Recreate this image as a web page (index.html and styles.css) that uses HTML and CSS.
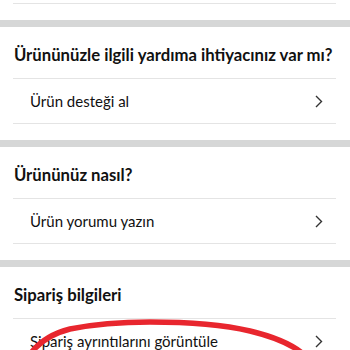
FILE: index.html
```html
<!DOCTYPE html>
<html lang="tr">
<head>
<meta charset="utf-8">
<link rel="stylesheet" href="styles.css">
</head>
<body>
<div class="page">
  <div class="divider first"></div>
  <section class="section">
    <div class="band"></div>
    <h2 class="heading">Ürününüzle ilgili yardıma ihtiyacınız var mı?</h2>
    <div class="divider"></div>
    <div class="row"><span class="label">Ürün desteği al</span><svg class="chev" width="8" height="13" viewBox="0 0 8 13"><polyline points="1,1 6.5,6.5 1,12" fill="none" stroke="#333" stroke-width="1.4"/></svg></div>
    <div class="divider"></div>
  </section>
  <section class="section">
    <div class="band"></div>
    <h2 class="heading">Ürününüz nasıl?</h2>
    <div class="divider"></div>
    <div class="row"><span class="label">Ürün yorumu yazın</span><svg class="chev" width="8" height="13" viewBox="0 0 8 13"><polyline points="1,1 6.5,6.5 1,12" fill="none" stroke="#333" stroke-width="1.4"/></svg></div>
    <div class="divider"></div>
  </section>
  <section class="section">
    <div class="band"></div>
    <h2 class="heading">Sipariş bilgileri</h2>
    <div class="divider"></div>
    <div class="row"><span class="label">Sipariş ayrıntılarını görüntüle</span><svg class="chev" width="8" height="13" viewBox="0 0 8 13"><polyline points="1,1 6.5,6.5 1,12" fill="none" stroke="#333" stroke-width="1.4"/></svg></div>
  </section>
  <svg class="mark" width="350" height="350" viewBox="0 0 350 350"><path d="M31,353 C38,344 50,334 70,329 C95,324 125,322 150,322 C185,322 220,324 250,331 C275,337 292,345 302,353" fill="none" stroke="#e8262e" stroke-width="5.5" stroke-linecap="round"/></svg>
</div>
</body>
</html>
```
FILE: styles.css
```css
html, body {
  margin: 0;
  padding: 0;
  background: #fff;
}
.page {
  position: relative;
  width: 350px;
  height: 350px;
  overflow: hidden;
  font-family: Lato, "Noto Sans", sans-serif;
  color: #111;
  padding-top: 3px;
  box-sizing: border-box;
}
.divider {
  height: 1px;
  background: #e4e4e4;
  margin: 0 14px 0 13px;
}
.section {
  padding-top: 16px;
}
.band {
  height: 7px;
  background: #d6d7d7;
}
.heading {
  margin: 0;
  height: 51px;
  box-sizing: border-box;
  padding: 18px 10px 0 14px;
  font-size: 16.7px;
  line-height: 20px;
  font-weight: 700;
  white-space: nowrap;
}
.row {
  height: 44px;
  display: flex;
  align-items: center;
  justify-content: space-between;
  padding: 0 27px 0 30px;
  font-size: 15px;
}
.chev {
  display: block;
}
.mark {
  position: absolute;
  left: 0;
  top: 0;
  pointer-events: none;
}
```
